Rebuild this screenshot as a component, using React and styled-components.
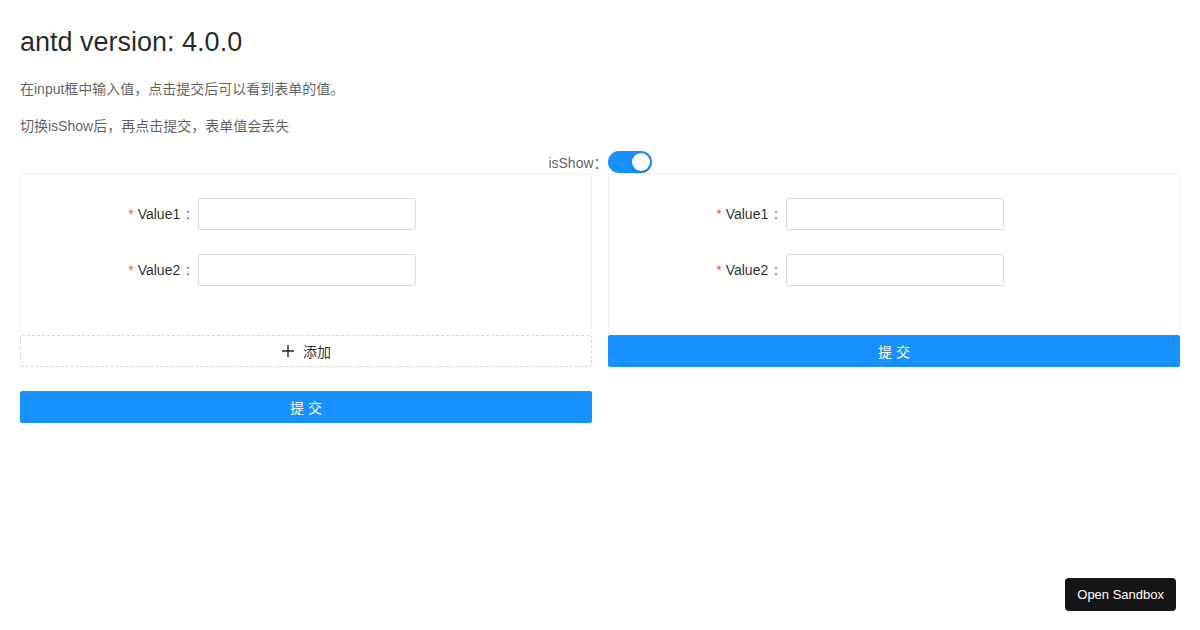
import React, { useState } from "react";
import styled, { createGlobalStyle } from "styled-components";

const GlobalStyle = createGlobalStyle`
  body {
    margin: 0;
    background: #fff;
    font-family: "Liberation Sans", Arial, "Noto Sans CJK SC", sans-serif;
    font-size: 14px;
    color: rgba(0, 0, 0, 0.65);
  }
`;

const Page = styled.div`
  padding: 20px;
`;

const Title = styled.h2`
  margin: 4px 0 18px;
  font-size: 27px;
  font-weight: normal;
  line-height: 36px;
  color: rgba(0, 0, 0, 0.85);
`;

const Text = styled.p`
  margin: 0 0 15px;
  line-height: 22px;
`;

const ToggleRow = styled.div`
  display: flex;
  justify-content: center;
  align-items: center;
  height: 22px;
  margin-top: -1px;
  color: rgba(0, 0, 0, 0.65);
`;

const Switch = styled.button`
  position: relative;
  width: 44px;
  height: 22px;
  padding: 0;
  border: none;
  border-radius: 11px;
  background: ${({ checked }) => (checked ? "#1890ff" : "rgba(0,0,0,0.25)")};
  cursor: pointer;
  &::after {
    content: "";
    position: absolute;
    top: 2px;
    left: ${({ checked }) => (checked ? "24px" : "2px")};
    width: 18px;
    height: 18px;
    border-radius: 50%;
    background: #fff;
    box-shadow: 0 2px 4px 0 rgba(0, 35, 11, 0.2);
  }
`;

const Columns = styled.div`
  display: grid;
  grid-template-columns: 1fr 1fr;
  gap: 16px;
  align-items: start;
`;

const Column = styled.div`
  display: flex;
  flex-direction: column;
`;

const Card = styled.div`
  border: 1px solid #f0f0f0;
  border-bottom: none;
  padding: 24px 24px 25px;
`;

const FormItem = styled.div`
  display: grid;
  grid-template-columns: 153px 218px;
  align-items: center;
  margin-bottom: 24px;
`;

const Label = styled.label`
  text-align: right;
  color: rgba(0, 0, 0, 0.85);
  white-space: nowrap;
  &::before {
    content: "*";
    color: #ff4d4f;
    margin-right: 4px;
    font-family: SimSun, sans-serif;
  }
  &::after {
    content: ":";
    margin: 0 8px 0 2px;
  }
`;

const Input = styled.input`
  box-sizing: border-box;
  width: 100%;
  height: 32px;
  padding: 4px 11px;
  border: 1px solid #d9d9d9;
  border-radius: 2px;
  font-size: 14px;
  outline: none;
`;

const Button = styled.button`
  display: flex;
  align-items: center;
  justify-content: center;
  gap: 8px;
  width: 100%;
  height: 32px;
  border-radius: 2px;
  font-family: inherit;
  font-size: 14px;
  cursor: pointer;
  margin-top: ${({ spaced }) => (spaced ? "24px" : "0")};
  border: 1px ${({ primary }) => (primary ? "solid #1890ff" : "dashed #d9d9d9")};
  background: ${({ primary }) => (primary ? "#1890ff" : "#fff")};
  color: ${({ primary }) => (primary ? "#fff" : "rgba(0,0,0,0.85)")};
`;

const SandboxButton = styled.button`
  position: fixed;
  right: 24px;
  bottom: 19px;
  height: 33px;
  padding: 0 12px;
  border: none;
  border-radius: 4px;
  background: #151515;
  color: #fff;
  font-family: "Liberation Sans", Arial, sans-serif;
  font-size: 13px;
`;

const PlusIcon = () => (
  <svg width="14" height="14" viewBox="0 0 14 14" fill="none" stroke="currentColor" strokeWidth="1.4">
    <path d="M7 1v12M1 7h12" />
  </svg>
);

const Fields = () => (
  <>
    <FormItem>
      <Label>Value1 </Label>
      <Input />
    </FormItem>
    <FormItem>
      <Label>Value2 </Label>
      <Input />
    </FormItem>
  </>
);

export default function App() {
  const [show, setShow] = useState(true);
  return (
    <Page>
      <GlobalStyle />
      <Title>antd version: 4.0.0</Title>
      <Text>在input框中输入值，点击提交后可以看到表单的值。</Text>
      <Text>切换isShow后，再点击提交，表单值会丢失</Text>
      <ToggleRow>
        isShow：
        <Switch checked={show} onClick={() => setShow(!show)} />
      </ToggleRow>
      <Columns>
        <Column>
          <Card>
            <Fields />
          </Card>
          <Button>
            <PlusIcon />
            添加
          </Button>
          <Button primary spaced>
            提 交
          </Button>
        </Column>
        <Column>
          <Card>
            <Fields />
          </Card>
          <Button primary>提 交</Button>
        </Column>
      </Columns>
      <SandboxButton>Open Sandbox</SandboxButton>
    </Page>
  );
}
